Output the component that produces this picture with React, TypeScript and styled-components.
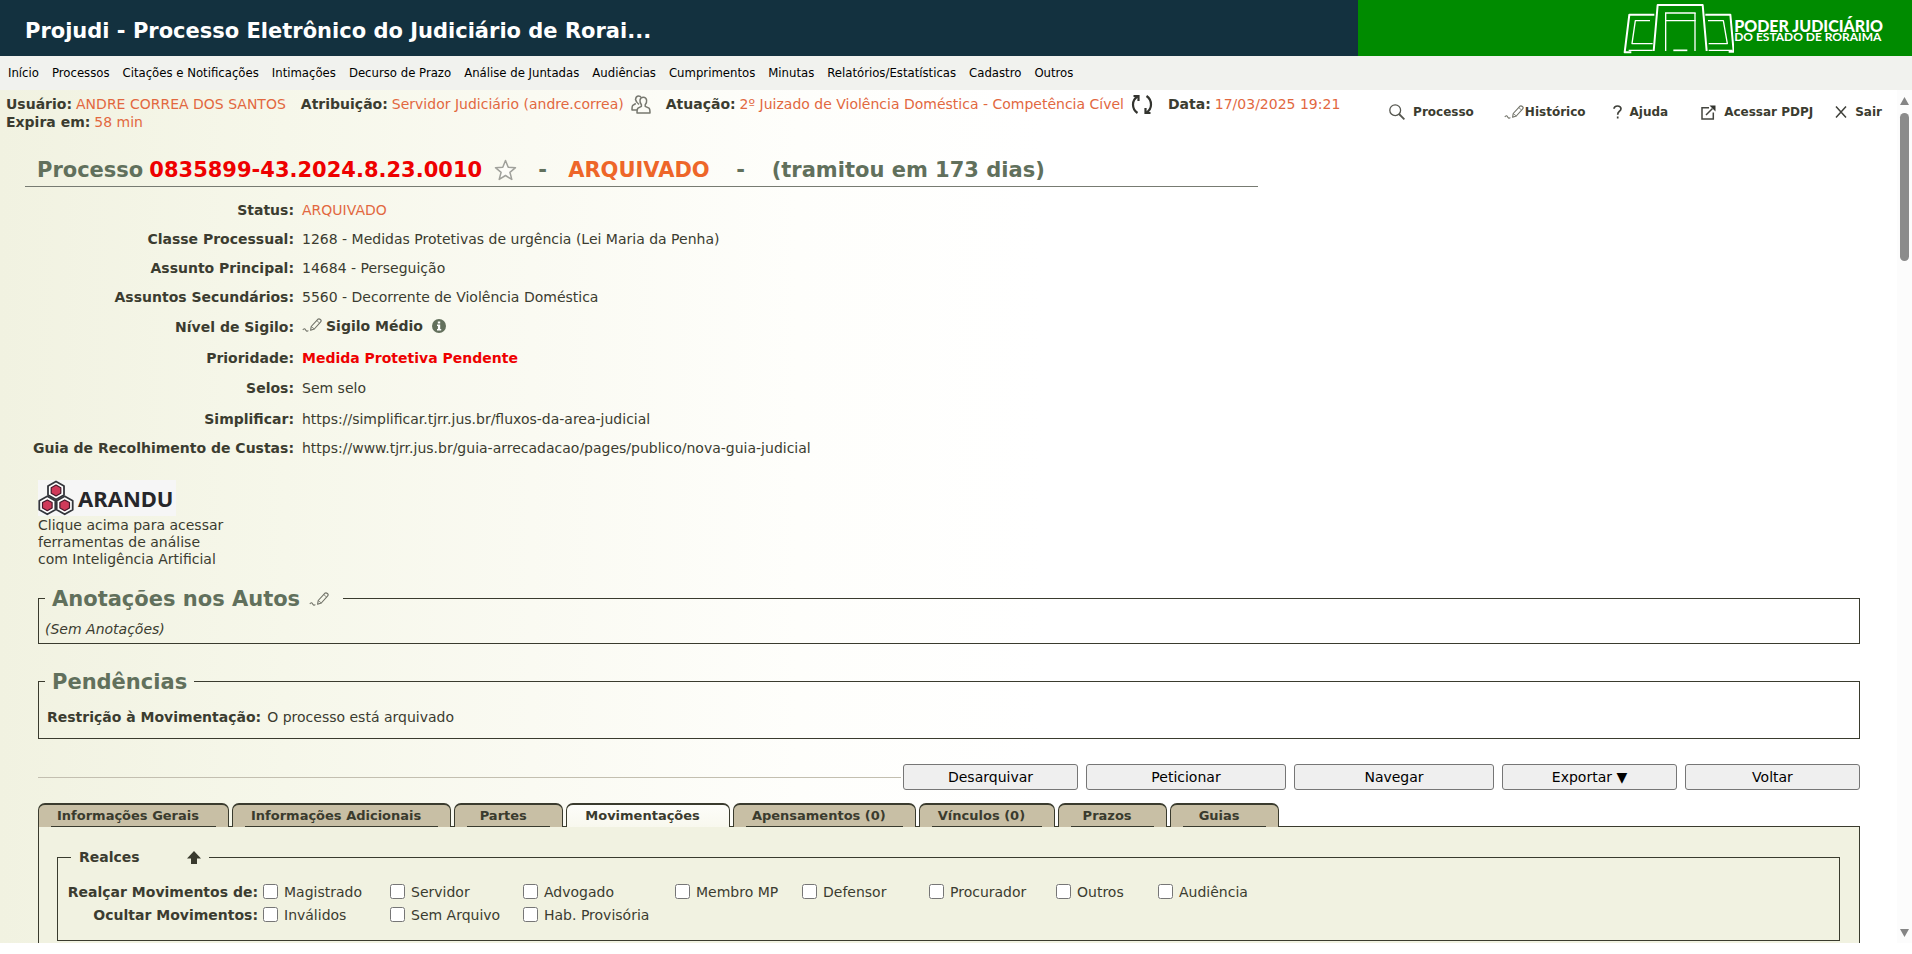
import React from "react";
import styled, { createGlobalStyle, css } from "styled-components";

const ink = "#3b3c30";
const line = "#3a3b2e";
const orange = "#e2683f";
const moss = "#61705c";
const cream = "#f1f2e1";

const GlobalStyle = createGlobalStyle`
  *, *::before, *::after { box-sizing: border-box; }
  body {
    margin: 0;
    background: #fff;
    color: ${ink};
    font: 14px/18px "DejaVu Sans", Verdana, sans-serif;
  }
  a { color: inherit; text-decoration: none; }
`;

const Page = styled.div`
  display: flex;
  flex-direction: column;
  height: 100vh;
  overflow: hidden;
`;

/* ---------- top banner ---------- */

const Banner = styled.header`
  display: flex;
  flex: none;
  height: 56px;
`;

const Title = styled.h1`
  flex: 0 0 71%;
  min-width: 0;
  margin: 0;
  padding: 3px 0 0 25px;
  background: #13313f;
  color: #fff;
  font-size: 21px;
  line-height: 56px;
  white-space: nowrap;
`;

const Court = styled.div`
  flex: 1;
  display: flex;
  align-items: center;
  justify-content: flex-end;
  padding-right: 29px;
  background: #008b00;
  color: #fff;
`;

const CourtName = styled.div`
  font: 900 16px/12px Lato, sans-serif;
  white-space: nowrap;
  padding-top: 6px;
`;

const CourtState = styled.div`
  font-size: 12px;
  font-weight: 700;
  line-height: 10px;
`;

/* ---------- menu ---------- */

const Menu = styled.nav`
  display: flex;
  flex: none;
  gap: 13px;
  height: 34px;
  padding-left: 8px;
  background: #f1f2ee;
  color: #000;
  font: 13px/34px "DejaVu Sans Condensed", "DejaVu Sans", sans-serif;
`;

/* ---------- scrolling area ---------- */

const Viewport = styled.div`
  display: flex;
  flex: 1;
  min-height: 0;
  margin-bottom: 11px;
`;

const Content = styled.main`
  flex: 1;
  min-width: 0;
  overflow: hidden;
  background: linear-gradient(to right, ${cream} 0, #f6f7ea 15%, #fafaf2 28%, #fefefb 42%, #fff 55%);
`;

const ScrollTrack = styled.div`
  display: flex;
  flex: none;
  flex-direction: column;
  align-items: center;
  width: 15px;
  padding: 7px 0 6px;
  background: #fcfcfc;
`;

const ScrollThumb = styled.div`
  width: 9px;
  height: 148px;
  margin: 8px 0 auto;
  border-radius: 5px;
  background: #8b8b8b;
`;

const UserBar = styled.div`
  display: flex;
  justify-content: space-between;
  height: 66px;
  padding: 5px 15px 0 6px;
`;

const UserRow = styled.div`
  display: flex;
  align-items: center;
  height: 18px;
  white-space: nowrap;
`;

const UserItem = styled.span`
  display: inline-flex;
  align-items: center;
  gap: 4px;
  margin-right: 15px;

  svg { margin-left: 3px; }
`;

const Orange = styled.span`
  color: ${orange};
`;

const Shortcuts = styled.div`
  display: flex;
  align-items: center;
  height: 34px;
  font-size: 12px;
  font-weight: 700;
  white-space: nowrap;
`;

const Shortcut = styled.a<{ $before?: number; $gap?: number }>`
  display: inline-flex;
  align-items: center;
  gap: ${(p) => p.$gap ?? 8}px;
  margin-left: ${(p) => p.$before ?? 0}px;
`;

const Heading = styled.h2`
  display: flex;
  align-items: center;
  width: 65%;
  height: 31px;
  margin: 0 0 0 25px;
  padding: 0 0 3px 12px;
  border-bottom: 1px solid #777b72;
  color: ${moss};
  font-size: 21px;
  line-height: 28px;
  white-space: nowrap;
`;

const CaseNumber = styled.span`
  margin: 0 12px 0 6px;
  color: #ee0000;
`;

const Archived = styled.span`
  color: #ee6629;
`;

const Dash = styled.span<{ $wide?: boolean }>`
  width: ${(p) => (p.$wide ? 62 : 51)}px;
  text-align: center;
`;

const Body = styled.div`
  padding: 8px 37px 0 38px;
`;

const Facts = styled.table`
  margin-left: -5px;
  border-collapse: collapse;

  th {
    width: 256px;
    padding: 0;
    text-align: right;
    white-space: nowrap;
  }
  td {
    padding: 0 0 0 8px;
    white-space: nowrap;
  }
`;

const FactRow = styled.tr<{ $tall?: boolean }>`
  height: ${(p) => (p.$tall ? 32 : 29)}px;
`;

const Inline = styled.span`
  display: inline-flex;
  align-items: center;
  gap: 4px;
  font-weight: 700;
`;

const Alert = styled.strong`
  color: #ee0000;
`;

const Arandu = styled.a`
  display: flex;
  align-items: center;
  gap: 4px;
  width: 138px;
  height: 36px;
  margin-top: 18px;
  background: #f6f6f6;
  color: #26262a;
  font: 700 22px/34px "Noto Sans", sans-serif;
`;

const Hint = styled.p`
  margin: 1px 0 0;
  line-height: 17px;
`;

const Box = styled.fieldset`
  min-width: 0;
  margin: 0;
  border: 1px solid ${line};
`;

const NotesBox = styled(Box)`
  margin-top: 16px;
  padding: 7px 6px 4px;
  line-height: 20px;
`;

const PendingBox = styled(Box)`
  margin-top: 23px;
  padding: 12px 6px 11px;
  line-height: 20px;

  strong { margin: 0 6px 0 2px; }
`;

const BoxTitle = styled.legend`
  display: flex;
  align-items: center;
  padding: 2px 7px 0;
  color: ${moss};
  font-size: 21px;
  font-weight: 700;
  line-height: 26px;

  a { display: flex; margin: 0 7px 0 9px; }
`;

const Actions = styled.div`
  display: flex;
  align-items: center;
  gap: 8px;
  margin-top: 25px;
`;

const Rule = styled.hr`
  flex: 1;
  height: 1px;
  margin: 0 -6px 0 0;
  border: 0;
  background: #c3bfb0;
`;

const Button = styled.button<{ $wide?: boolean }>`
  width: ${(p) => (p.$wide ? 200 : 175)}px;
  height: 26px;
  padding: 0;
  border: 1px solid #767676;
  border-radius: 3px;
  background: #efefef;
  color: #000;
  font: 14px/24px "DejaVu Sans", Verdana, sans-serif;
`;

const Tabs = styled.div`
  display: flex;
  gap: 3px;
  margin: 13px 0 -1px;
`;

const Tab = styled.button<{ $active?: boolean }>`
  min-width: 109px;
  height: 24px;
  padding: 0 29px 0 18px;
  border: 1px solid ${line};
  border-top-width: 2px;
  border-bottom: 0;
  border-radius: 7px 7px 0 0;
  background: linear-gradient(${line}, ${line}) 12px 100% / calc(100% - 24px) 1px no-repeat #c8bfa5;
  color: ${line};
  font: 700 13px/20px "DejaVu Sans", Verdana, sans-serif;
  white-space: nowrap;

  ${(p) =>
    p.$active &&
    css`
      background: linear-gradient(#fdfdf9, #f8f8ee);
    `}
`;

const Panel = styled.section`
  padding: 20px 19px 40px 18px;
  border: 1px solid ${line};
  border-bottom: 0;
  background: ${cream};
`;

const FilterBox = styled(Box)`
  padding: 13px 13px 14px;
`;

const FilterTitle = styled.legend`
  display: flex;
  align-items: center;
  gap: 47px;
  padding: 0 8px;
  font-weight: 700;
  line-height: 20px;
`;

const Filters = styled.div`
  display: grid;
  grid-template-columns: 189px 127px 133px 152px 127px 127px 127px 102px 110px;
  grid-auto-rows: 23px;
  align-items: center;
`;

const FilterLabel = styled.strong`
  grid-column: 1;
  justify-self: end;
  padding-right: 2px;
  white-space: nowrap;
`;

const Option = styled.label`
  display: flex;
  align-items: center;
  gap: 6px;
  padding-left: 3px;
  white-space: nowrap;

  input {
    width: 15px;
    height: 15px;
    margin: 0;
  }
`;

/* ---------- drawings ---------- */

const CourtLogo = () => (
  <svg width="112" height="54" viewBox="64 2 336 162" fill="none" stroke="#fff" strokeLinejoin="round">
    <g strokeWidth="6">
      <path d="M161 43H86L72 156h20" />
      <path d="M159 152L171 14H306L318 152" />
      <path d="M314 43H389L399 154H384" />
      <path d="M193 38H285M193 61H285" strokeWidth="4" />
      <path d="M195 38V152M283 38V152" strokeWidth="4" />
    </g>
    <g strokeWidth="4">
      <path d="M148 61H104L94 130H156M84 150H156" />
      <path d="M322 61H368L380 130H324M324 150H396" />
      <path d="M218 150H260" strokeWidth="5" />
    </g>
  </svg>
);

const PenIcon = () => (
  <svg width="20" height="15" viewBox="0 0 20 15" fill="none" stroke="#6f7066" strokeWidth="1.1" strokeLinejoin="round">
    <path d="M8.600 12.300L9.200 8.500L15.800 1.300Q17 .4 18.400 1.500T18.700 3.800L12.300 11Z" />
    <path d="M14.800 2.600L17.500 5M9.200 8.500L12.300 11" strokeWidth=".8" />
    <path d="M.8 12Q2.400 9.600 3.500 11.800T6.400 12.600" />
  </svg>
);

const PeopleIcon = () => (
  <svg width="20" height="19" viewBox="0 0 20 19" fill="none" stroke="#77786f" strokeWidth="1.5" strokeLinejoin="round">
    <path d="M8 9.5Q5 7 4.500 4.500Q5 1 7.500 1Q9.500 1 10 2.500M4.800 8.500L1.800 10.300Q1 11 1 15H6" />
    <path d="M10.400 9.800Q8.700 7.500 9 5.200Q9.500 2.300 12.300 2.300T15.600 5.200Q16 7.500 14.200 9.800V11.300L18 13.200Q19 14 19 18H6Q6 14 7 13.200L10.400 11.300Z" />
  </svg>
);

const RefreshIcon = () => (
  <svg width="22" height="21" viewBox="0 0 22 21" fill="none" stroke="#33342f" strokeWidth="2.200">
    <path d="M6.500 2.500Q2 5.500 2 10.500Q2 16 6.500 19M15.500 18.500Q20 15.500 20 10.500Q20 5 15.500 2" />
    <path d="M2.500 2H7.500V7M19.500 19H14.500V14" />
  </svg>
);

const StarIcon = () => (
  <svg width="23" height="22" viewBox="0 0 23 22" fill="#fdfdf8" stroke="#a0a19b" strokeWidth="1.500" strokeLinejoin="round">
    <path d="M11.500 1.500L14.200 8.200L21.500 8.700L15.900 13.300L17.800 20.400L11.500 16.500L5.200 20.400L7.100 13.300L1.500 8.700L8.800 8.200Z" />
  </svg>
);

const SearchIcon = () => (
  <svg width="16" height="16" viewBox="0 0 16 16" fill="none" stroke="#55564f" strokeWidth="1.300">
    <circle cx="6.200" cy="6.200" r="5.400" />
    <path d="M10 10L15.400 15.400" strokeWidth="1.800" />
  </svg>
);

const HelpIcon = () => (
  <svg width="9" height="14" viewBox="0 0 9 14" fill="none" stroke="#3f403a" strokeWidth="1.700">
    <path d="M1 3.800Q1.200 1 4.500 1T8 3.800Q8 5.300 6.200 6.500Q4.700 7.500 4.700 9.800M4.700 11.500V13.500" />
  </svg>
);

const ExternalIcon = () => (
  <svg width="15" height="15" viewBox="0 0 15 15" fill="none" stroke="#44453f" strokeWidth="1.500">
    <path d="M8 2.800H1V14H12.300V7.500M5 10L11.500 3.500" />
    <path d="M8.500 .5H14.500V6.500Z" fill="#33342f" stroke="none" />
  </svg>
);

const CloseIcon = () => (
  <svg width="12" height="12" viewBox="0 0 12 12" stroke="#3f403a" strokeWidth="1.500">
    <path d="M1 .5L11 11.500M11 .5L1 11.500" />
  </svg>
);

const InfoIcon = () => (
  <svg width="14" height="14" viewBox="0 0 14 14">
    <circle cx="7" cy="7" r="7" fill="#63705c" />
    <path d="M5.800 2.500H8.200V4.600H5.800ZM5 5.600H8.200V10H9.200V11.400H5V10H5.900V7H5Z" fill="#fff" />
  </svg>
);

const ArrowUpIcon = () => (
  <svg width="14" height="13" viewBox="0 0 14 13">
    <path d="M7 0L14 7.500H10V13H4V7.500H0Z" fill={line} />
  </svg>
);

const Hexagon = ({ x, y }: { x: number; y: number }) => (
  <g transform={`translate(${x} ${y})`} strokeLinejoin="round">
    <path d="M0-9L8-4.500V4.500L0 9L-8 4.500V-4.500Z" fill="#fff" stroke="#34363c" strokeWidth="1.800" />
    <path d="M0-5.400L4.800-2.700V2.700L0 5.400L-4.800 2.700V-2.700Z" fill="#d03a5a" stroke="#45182a" strokeWidth="1.200" />
  </g>
);

const HexLogo = () => (
  <svg width="36" height="36" viewBox="0 0 36 36">
    <Hexagon x={18} y={10.5} />
    <Hexagon x={9.3} y={25.3} />
    <Hexagon x={26.7} y={25.3} />
  </svg>
);

const ScrollArrow = ({ down }: { down?: boolean }) => (
  <svg width="9" height="8" viewBox="0 0 9 8">
    <path d={down ? "M0 0H9L4.500 8Z" : "M0 8H9L4.500 0Z"} fill="#858585" />
  </svg>
);

/* ---------- data ---------- */

const menuItems = [
  "Início", "Processos", "Citações e Notificações", "Intimações", "Decurso de Prazo", "Análise de Juntadas",
  "Audiências", "Cumprimentos", "Minutas", "Relatórios/Estatísticas", "Cadastro", "Outros",
];

const tabs = [
  "Informações Gerais", "Informações Adicionais", "Partes", "Movimentações",
  "Apensamentos (0)", "Vínculos (0)", "Prazos", "Guias",
];

const highlight = ["Magistrado", "Servidor", "Advogado", "Membro MP", "Defensor", "Procurador", "Outros", "Audiência"];
const hide = ["Inválidos", "Sem Arquivo", "Hab. Provisória"];

const facts: { label: string; value: React.ReactNode; tall?: boolean }[] = [
  { label: "Status:", value: <Orange>ARQUIVADO</Orange> },
  { label: "Classe Processual:", value: "1268 - Medidas Protetivas de urgência (Lei Maria da Penha)" },
  { label: "Assunto Principal:", value: "14684 - Perseguição" },
  { label: "Assuntos Secundários:", value: "5560 - Decorrente de Violência Doméstica" },
  {
    label: "Nível de Sigilo:",
    tall: true,
    value: (
      <Inline>
        <PenIcon /> Sigilo Médio&nbsp; <InfoIcon />
      </Inline>
    ),
  },
  { label: "Prioridade:", value: <Alert>Medida Protetiva Pendente</Alert> },
  { label: "Selos:", value: "Sem selo", tall: true },
  {
    label: "Simplificar:",
    value: <a href="https://simplificar.tjrr.jus.br/fluxos-da-area-judicial">https://simplificar.tjrr.jus.br/fluxos-da-area-judicial</a>,
  },
  {
    label: "Guia de Recolhimento de Custas:",
    value: (
      <a href="https://www.tjrr.jus.br/guia-arrecadacao/pages/publico/nova-guia-judicial">
        https://www.tjrr.jus.br/guia-arrecadacao/pages/publico/nova-guia-judicial
      </a>
    ),
  },
];

export default function App() {
  return (
    <Page>
      <GlobalStyle />
      <Banner>
        <Title>Projudi - Processo Eletrônico do Judiciário de Rorai...</Title>
        <Court>
          <CourtLogo />
          <CourtName>
            PODER JUDICIÁRIO
            <CourtState>DO ESTADO DE RORAIMA</CourtState>
          </CourtName>
        </Court>
      </Banner>
      <Menu>
        {menuItems.map((m) => (
          <a href="#" key={m}>{m}</a>
        ))}
      </Menu>
      <Viewport>
        <Content>
          <UserBar>
            <div>
              <UserRow>
                <UserItem><b>Usuário:</b> <Orange>ANDRE CORREA DOS SANTOS</Orange></UserItem>
                <UserItem>
                  <b>Atribuição:</b> <Orange>Servidor Judiciário (andre.correa)</Orange> <PeopleIcon />
                </UserItem>
                <UserItem>
                  <b>Atuação:</b> <Orange>2º Juizado de Violência Doméstica - Competência Cível</Orange> <RefreshIcon />
                </UserItem>
                <UserItem><b>Data:</b> <Orange>17/03/2025 19:21</Orange></UserItem>
              </UserRow>
              <UserRow>
                <UserItem><b>Expira em:</b> <Orange>58 min</Orange></UserItem>
              </UserRow>
            </div>
            <Shortcuts>
              <Shortcut href="#"><SearchIcon /> Processo</Shortcut>
              <Shortcut href="#" $before={30} $gap={1}><PenIcon /> Histórico</Shortcut>
              <Shortcut href="#" $before={27}><HelpIcon /> Ajuda</Shortcut>
              <Shortcut href="#" $before={33}><ExternalIcon /> Acessar PDPJ</Shortcut>
              <Shortcut href="#" $before={22}><CloseIcon /> Sair</Shortcut>
            </Shortcuts>
          </UserBar>

          <Heading>
            Processo <CaseNumber>0835899-43.2024.8.23.0010</CaseNumber> <StarIcon /> <Dash>-</Dash>
            <Archived>ARQUIVADO</Archived> <Dash $wide>-</Dash> (tramitou em 173 dias)
          </Heading>

          <Body>
            <Facts>
              <tbody>
                {facts.map((f) => (
                  <FactRow key={f.label} $tall={f.tall}>
                    <th scope="row">{f.label}</th>
                    <td>{f.value}</td>
                  </FactRow>
                ))}
              </tbody>
            </Facts>

            <Arandu href="#"><HexLogo /> ARANDU</Arandu>
            <Hint>
              Clique acima para acessar
              <br />
              ferramentas de análise
              <br />
              com Inteligência Artificial
            </Hint>

            <NotesBox>
              <BoxTitle>
                Anotações nos Autos <a href="#" aria-label="Editar"><PenIcon /></a>
              </BoxTitle>
              <i>(Sem Anotações)</i>
            </NotesBox>

            <PendingBox>
              <BoxTitle>Pendências</BoxTitle>
              <strong>Restrição à Movimentação:</strong>O processo está arquivado
            </PendingBox>

            <Actions>
              <Rule />
              <Button>Desarquivar</Button>
              <Button $wide>Peticionar</Button>
              <Button $wide>Navegar</Button>
              <Button>Exportar ▼</Button>
              <Button>Voltar</Button>
            </Actions>

            <Tabs role="tablist">
              {tabs.map((t) => (
                <Tab key={t} role="tab" $active={t === "Movimentações"} aria-selected={t === "Movimentações"}>
                  {t}
                </Tab>
              ))}
            </Tabs>
            <Panel>
              <FilterBox>
                <FilterTitle>
                  Realces <ArrowUpIcon />
                </FilterTitle>
                <Filters>
                  <FilterLabel>Realçar Movimentos de:</FilterLabel>
                  {highlight.map((h) => (
                    <Option key={h}><input type="checkbox" />{h}</Option>
                  ))}
                  <FilterLabel>Ocultar Movimentos:</FilterLabel>
                  {hide.map((h) => (
                    <Option key={h}><input type="checkbox" />{h}</Option>
                  ))}
                </Filters>
              </FilterBox>
            </Panel>
          </Body>
        </Content>
        <ScrollTrack aria-hidden="true">
          <ScrollArrow />
          <ScrollThumb />
          <ScrollArrow down />
        </ScrollTrack>
      </Viewport>
    </Page>
  );
}
